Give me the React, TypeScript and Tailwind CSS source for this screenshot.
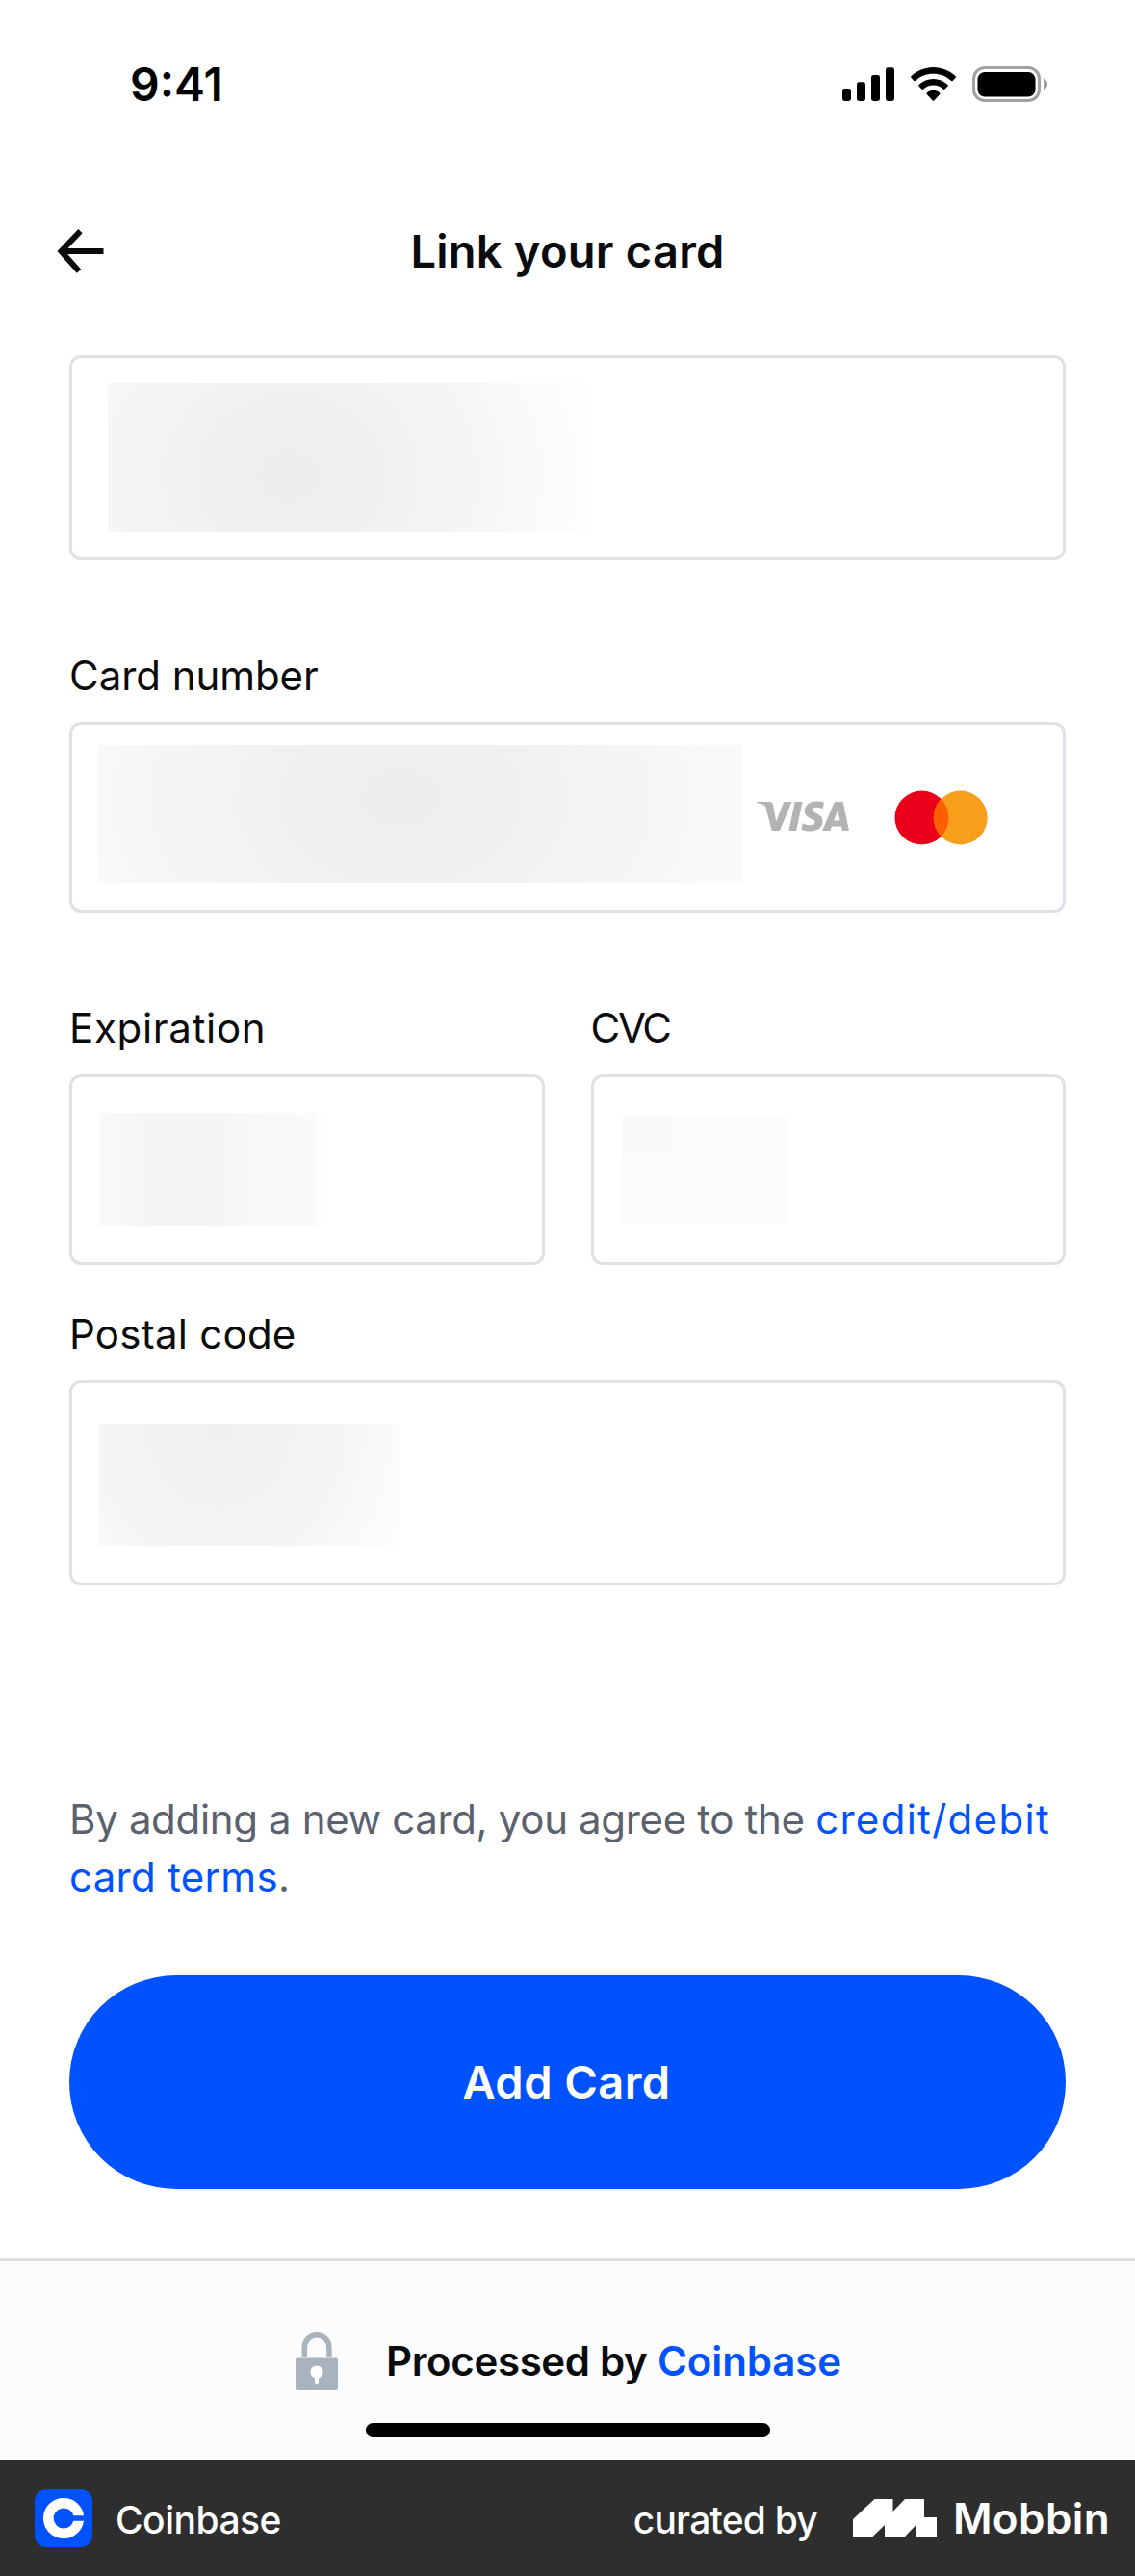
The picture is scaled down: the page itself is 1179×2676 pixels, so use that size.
import type { ReactNode } from "react";
import { SiVisa } from "react-icons/si";

function StatusBar() {
  return (
    <div className="flex h-[174px] items-center justify-between pl-[135px] pr-[91px] pt-[1px]">
      <span className="text-[48px] leading-[56px] font-semibold text-black">9:41</span>
      <div className="flex items-center">
        <svg width="54" height="36" viewBox="0 0 54 36">
          <rect x="0" y="22" width="9" height="13" rx="2.4" />
          <rect x="15" y="15.3" width="9" height="19.7" rx="2.4" />
          <rect x="30" y="8" width="9" height="27" rx="2.4" />
          <rect x="45" y="0.3" width="9" height="34.7" rx="2.4" />
        </svg>
        <svg className="ml-[17px]" width="47" height="36" viewBox="0 0 47 36">
          <path d="M23.5 0C32.400 0 40.400 3.500 46.400 9.100a1.400 1.400 0 0 1 0 2L43.900 13.700a1.400 1.400 0 0 1-2 0C37 9.300 30.600 6.700 23.500 6.700S10 9.300 5.100 13.700a1.400 1.400 0 0 1-2 0L.6 11.100a1.400 1.400 0 0 1 0-2C6.600 3.500 14.600 0 23.500 0Z" />
          <path d="M23.500 11.900c5.700 0 10.900 2.200 14.800 5.800a1.400 1.400 0 0 1 0 2.100l-2.700 2.700a1.400 1.400 0 0 1-1.900 0c-2.700-2.400-6.300-3.900-10.200-3.900s-7.500 1.500-10.200 3.900a1.400 1.400 0 0 1-1.900 0l-2.700-2.700a1.400 1.400 0 0 1 0-2.100c3.900-3.600 9.100-5.800 14.800-5.800Z" />
          <path d="M23.500 23.800c2.500 0 4.800.9 6.500 2.400a1.300 1.300 0 0 1 0 2l-5.500 6a1.400 1.400 0 0 1-2 0l-5.500-6a1.300 1.300 0 0 1 0-2c1.700-1.500 4-2.400 6.500-2.400Z" />
        </svg>
        <svg className="ml-[17px]" width="78" height="37" viewBox="0 0 78 37">
          <rect x="1.5" y="1.5" width="68" height="34" rx="11.500" fill="none" stroke="#a1a1a1" strokeWidth="3" />
          <rect x="5.500" y="6" width="60" height="25.500" rx="7.500" />
          <path d="M74 12.800c2.600 1 4.200 3 4.200 5.700s-1.600 4.700-4.200 5.700Z" fill="#a1a1a1" />
        </svg>
      </div>
    </div>
  );
}

function Header() {
  return (
    <header className="relative flex h-[174px] items-center justify-center">
      <button className="absolute left-[59px]" aria-label="Back">
        <svg width="49" height="46" viewBox="0 0 49 46" fill="none" stroke="#0a0b0d" strokeWidth="6">
          <path d="M48.500 23H5M24.500 2.200 4.500 23l18.500 20.800" />
        </svg>
      </button>
      <h1 className="text-[47px] leading-[60px] font-semibold tracking-[0.25px]">Link your card</h1>
    </header>
  );
}

function Label({ children, className }: { children: ReactNode; className?: string }) {
  return <label className={`mb-[23px] block h-[50px] text-[42px] leading-[50px] ${className ?? ""}`}>{children}</label>;
}

function Box({ children, className }: { children: ReactNode; className: string }) {
  return <div className={`flex rounded-[12px] border-[3px] bg-white ${className}`}>{children}</div>;
}

export default function App() {
  return (
    <div className="flex h-[2676px] w-[1179px] flex-col overflow-hidden bg-white font-['Inter',sans-serif] text-[#0a0b0d]">
      <StatusBar />
      <Header />

      <main className="flex flex-col px-[72px] pt-[21px]">
        <Box className="h-[213px] border-[#e0e1e1] pl-[37px] pt-[26px]">
          <div className="h-[155px] w-[500px] bg-[radial-gradient(ellipse_300px_260px_at_38%_62%,#eeeeee_0%,#f0f0f0_30%,#f4f4f4_56%,#f9f9f9_82%,#fdfdfd_100%)]" />
        </Box>

        <Label className="mt-[95px] -tracking-[0.05px]">Card number</Label>
        <Box className="h-[198px] items-center border-[#dfe1e6] pl-[27px]">
          <div className="-mt-[8px] h-[143px] w-[669px] bg-[radial-gradient(ellipse_380px_280px_at_47%_38%,#eeeeee_0%,#f0f0f0_30%,#f4f4f4_58%,#f9f9f9_88%,#fafafa_100%)]" />
          <SiVisa className="-mt-[3px] ml-[15px] size-[96px] text-[#b3b3b3]" />
          <svg className="ml-[47px]" width="97" height="58" viewBox="0 0 97 58">
            <circle cx="28.500" cy="29.500" r="28" fill="#eb001b" />
            <circle cx="68.700" cy="29.500" r="28" fill="#f79e1b" />
            <path d="M48.600 10a28 28 0 0 1 0 39a28 28 0 0 1 0-39Z" fill="#ff5f00" />
          </svg>
        </Box>

        <div className="mt-[95px] grid grid-cols-2 gap-[48px]">
          <div>
            <Label className="tracking-[0.7px]">Expiration</Label>
            <Box className="h-[198px] border-[#e0e1e1] pl-[29px] pt-[37px]">
              <div className="h-[118px] w-[230px] bg-[linear-gradient(90deg,#f9f9f9_0%,#f5f5f5_22%,#f5f5f5_50%,#f8f8f8_70%,#fafafa_97%,#fdfdfd_98%)]" />
            </Box>
          </div>
          <div>
            <Label className="-tracking-[2.200px]">CVC</Label>
            <Box className="h-[198px] border-[#e0e1e1] pl-[29px] pt-[40px]">
              <div className="h-[112px] w-[170px] bg-[#fcfcfc]">
                <div className="h-[44px] w-[58px] bg-[#fafafa]" />
              </div>
            </Box>
          </div>
        </div>

        <Label className="mt-[47px] tracking-[0.25px]">Postal code</Label>
        <Box className="h-[213px] border-[#e0e1e1] pl-[28px] pt-[42px]">
          <div className="h-[127px] w-[313px] bg-[radial-gradient(ellipse_210px_240px_at_40%_0%,#f0f0f0_0%,#f2f2f2_35%,#f6f6f6_65%,#fafafa_85%,#fdfdfd_100%)]" />
        </Box>

        <p className="mt-[213px] text-[42px] leading-[60px] -tracking-[0.34px] text-[#5b616e]">
          By adding a new card, you agree to the{" "}
          <a className="text-[#0052ff]">
            <span className="tracking-[1.3px]">credit/debit</span> <span className="tracking-[0.3px]">card terms</span>
          </a>
          .
        </p>

        <button className="mt-[72px] h-[222px] rounded-full bg-[#0052ff] pr-[2px] pt-[1px] text-[47px] font-semibold tracking-[0.45px] text-white">
          Add Card
        </button>
      </main>

      <footer className="mt-[72px] flex h-[210px] flex-col items-center border-t-[3px] border-[#dedede] bg-[#fcfcfc] pt-[74px]">
        <div className="flex h-[60px] items-center pl-[2px]">
          <svg width="44" height="60" viewBox="0 0 44 60">
            <path d="M9.300 26V15.500a12.800 12.800 0 0 1 25.600 0V26" fill="none" stroke="#a9b3bd" strokeWidth="5.500" />
            <rect x="0" y="26.500" width="44" height="33.500" rx="2" fill="#a9b3bd" />
            <path d="M22 34.500a6.600 6.600 0 0 0-2 12.900v4.800a2 2 0 0 0 4 0v-4.800a6.600 6.600 0 0 0-2-12.900Z" fill="#fff" />
          </svg>
          <p className="ml-[50px] text-[42px] leading-[60px] font-semibold">
            <span className="-tracking-[0.35px]">Processed by</span>{" "}
            <a className="-tracking-[0.1px] text-[#0052ff]">Coinbase</a>
          </p>
        </div>
        <div className="mt-[34px] h-[15px] w-[420px] rounded-full bg-black" />
      </footer>

      <div className="flex h-[120px] items-center bg-[#2e2e2e] pl-[36px] pr-[26px] text-white">
        <svg width="60" height="60" viewBox="0 0 60 60">
          <rect width="60" height="60" rx="12" fill="#0052ff" />
          <path d="M30 40.500A10.500 10.500 0 1 1 40.300 27.200H51A21.100 21.100 0 1 0 51 32.800H40.300A10.500 10.500 0 0 1 30 40.500Z" fill="#fff" />
        </svg>
        <span className="ml-[24px] pt-[3px] text-[39px] leading-[48px] font-medium -tracking-[0.5px]">Coinbase</span>
        <span className="ml-auto pt-[3px] text-[39px] leading-[48px] font-medium -tracking-[0.8px]">curated by</span>
        <svg className="ml-[37px]" width="87" height="40" viewBox="0 0 87 40" fill="#fff">
          <path d="M0 40V21L22.500 0H41.500V13L54 0H74V19H87V40H65.500V27L53 40H33V27L19.500 40Z" />
        </svg>
        <span className="ml-[17px] text-[44px] leading-[52px] font-semibold tracking-[0.4px]">Mobbin</span>
      </div>
    </div>
  );
}
